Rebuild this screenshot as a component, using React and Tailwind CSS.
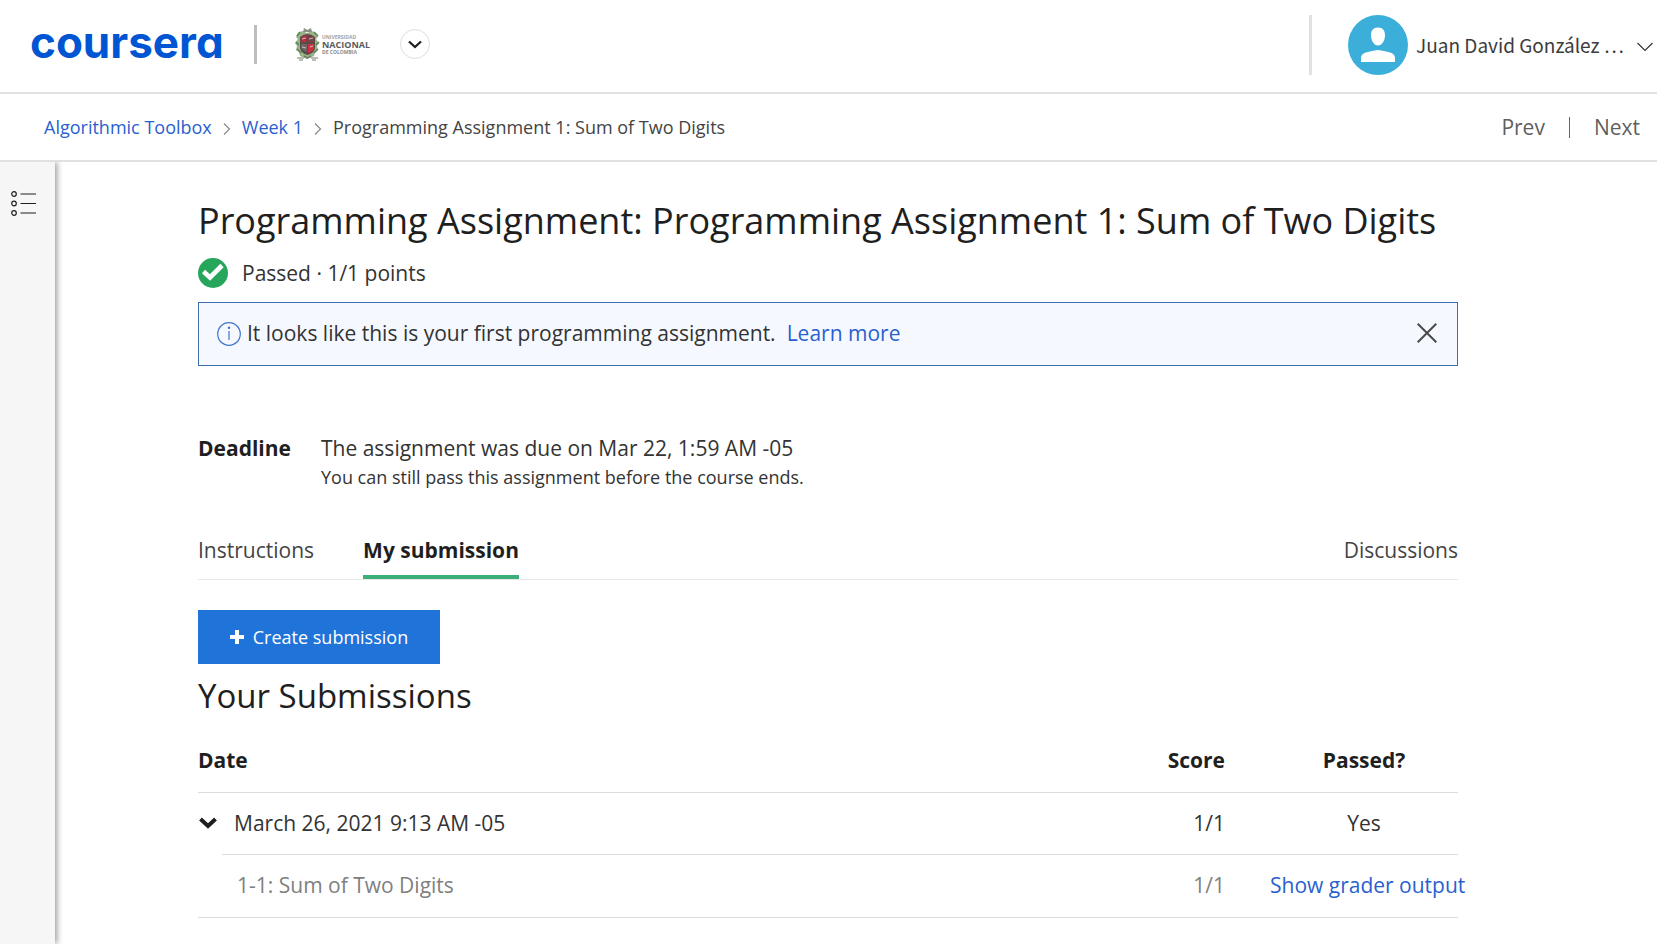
const crumbs = [
  { label: 'Algorithmic Toolbox', href: '#toolbox' },
  { label: 'Week 1', href: '#week-1' },
];

function UniversityLogo() {
  return (
    <svg viewBox="0 0 76 34" className="h-[34px] w-[76px]" role="img" aria-label="Universidad Nacional de Colombia">
      <path d="M8 4 4 6 2 10l2 2-3 4 2 3-1 4 3 2 1 4 7 3 7-3 1-4 3-2-1-4 2-3-3-4 2-2-2-4-4-2-5 2Z" fill="#9bb38a" />
      <path d="M6 5 3 9M20 5l4 4M2 15l3 3M25 15l-3 3M3 22l4 4M24 22l-4 4" stroke="#5f8555" strokeWidth="1.6" />
      <path d="M10 1l3.500 2L17 1l1 4h-9Z" fill="#8b9184" />
      <path d="M6 10q7.500-6 15 0v10c0 5-4 7-7.500 8C10 27 6 25 6 20Z" fill="#5a4a4a" />
      <path d="M7.500 10 12.500 8v7h-5Z" fill="#b8303a" />
      <path d="M14 17h6v3c0 3-2 5-6 6Z" fill="#d0313d" />
      <path d="M7 17h6v8c-4-1-6-3-6-6Z" fill="#6c6466" />
      <path d="M14 8l6 2v5h-6Z" fill="#7b4044" />
      <path d="M8 12l4-1M15 12l4-1M8 20l4 1M16 20l3-1" stroke="#c9b9b4" strokeWidth="1.200" />
      <path d="M3 31h7M17 31h7M5 33h4M18 33h4" stroke="#a3a99e" strokeWidth="1.500" />
      <path d="M10 29l3.500 2 3.500-2" stroke="#6e8263" strokeWidth="1.500" fill="none" />
      <g fontFamily="'Open Sans', sans-serif" fontWeight="700">
        <text x="28" y="12" fontSize="5" fill="#a3a3a3">UNIVERSIDAD</text>
        <text x="28" y="21" fontSize="9" fill="#5b5b5b">NACIONAL</text>
        <text x="28" y="27" fontSize="5" fill="#8a8a8a">DE COLOMBIA</text>
      </g>
    </svg>
  );
}

function Header() {
  return (
    <header className="flex h-[94px] items-start justify-between border-b-2 border-[#e1e1e1] pl-[30px] pr-1">
      <div className="flex h-[88px] items-center">
        <a href="#home" className="w-[193px] pb-1 font-['Inter',sans-serif] text-[44px] leading-[60px] font-bold text-[#0056d2] [font-feature-settings:'cv11']">
          coursera
        </a>
        <span className="ml-[31px] h-[39px] w-[3px] bg-[#bdbdbd]" />
        <a href="#university" className="ml-[37px]">
          <UniversityLogo />
        </a>
        <button type="button" aria-label="Choose program" className="ml-[30px] flex size-[30px] items-center justify-center rounded-full border border-[#dedede]">
          <svg viewBox="0 0 14 10" className="mt-[2px] h-[10px] w-[14px]" fill="none" stroke="#1f1f1f" strokeWidth="2.300">
            <path d="M1 1.500 7 7l6-5.500" />
          </svg>
        </button>
      </div>
      <div className="flex h-[90px] items-center">
        <span className="h-[60px] w-[3px] bg-[#e1e1e1]" />
        <button type="button" className="ml-9 flex items-center">
          <svg viewBox="0 0 60 60" className="size-[60px]">
            <circle cx="30" cy="30" r="30" fill="#3bafda" />
            <path d="M30 12.500c4.800 0 7.200 3 7 8-.2 5.500-3 10-7 10s-6.800-4.500-7-10c-.2-5 2.200-8 7-8Z" fill="#fff" />
            <path d="M13 47v-4c0-3 2-4.500 5-5.500 4-1.300 8-1.900 12-2.500 4 .6 8 1.200 12 2.500 3 1 5 2.500 5 5.500v4Z" fill="#fff" />
          </svg>
          <span className="ml-2 font-['Noto_Sans_CJK_SC',sans-serif] text-[19px] leading-[30px] text-[#3c3c3c]">Juan David González …</span>
          <svg viewBox="0 0 16 10" className="ml-[13px] mt-1 h-[10px] w-[16px]" fill="none" stroke="#333" strokeWidth="1.200">
            <path d="M.5 1 8 8.500 15.500 1" />
          </svg>
        </button>
      </div>
    </header>
  );
}

function Breadcrumbs() {
  return (
    <div className="flex h-[68px] items-center justify-between border-b-2 border-[#e1e1e1] pl-11 pr-[17px]">
      <nav aria-label="Breadcrumb" className="flex items-center text-[18px] leading-[26px]">
        {crumbs.map((c) => (
          <span key={c.label} className="flex items-center">
            <a href={c.href} className="text-[#2a5fcf]">{c.label}</a>
            <svg viewBox="0 0 8 12" className="mx-[11px] mt-1 h-[12px] w-[8px]" fill="none" stroke="#888" strokeWidth="1.200">
              <path d="m1 .5 5.500 5.500L1 11.500" />
            </svg>
          </span>
        ))}
        <span className="text-[#444]">Programming Assignment 1: Sum of Two Digits</span>
      </nav>
      <nav aria-label="Lesson" className="flex items-center text-[21px] leading-[30px] text-[#5f5f5f]">
        <a href="#prev">Prev</a>
        <span className="mx-6 h-[21px] w-px bg-[#666]" />
        <a href="#next">Next</a>
      </nav>
    </div>
  );
}

function Submissions() {
  return (
    <table className="mt-2 w-full table-fixed border-separate border-spacing-0 text-[21px] leading-[30px]">
      <colgroup>
        <col className="w-[24px]" />
        <col />
        <col className="w-[150px]" />
        <col className="w-[188px]" />
      </colgroup>
      <thead>
        <tr className="h-[65px] font-bold">
          <th colSpan={2} className="border-b border-[#dcdcdc] text-left">Date</th>
          <th className="border-b border-[#dcdcdc] pr-[45px] text-right">Score</th>
          <th className="border-b border-[#dcdcdc] text-center">Passed?</th>
        </tr>
      </thead>
      <tbody className="text-[#333]">
        <tr className="h-[62px]">
          <td className="pb-[2px]">
            <button type="button" aria-label="Collapse submission" className="block">
              <svg viewBox="0 0 20 14" className="h-[14px] w-[20px]" fill="none" stroke="#1f1f1f" strokeWidth="4">
                <path d="m2.500 3 7.500 7 7.500-7" />
              </svg>
            </button>
          </td>
          <td className="border-b border-[#dcdcdc] pb-[2px] pl-3">March 26, 2021 9:13 AM -05</td>
          <td className="border-b border-[#dcdcdc] pr-[45px] pb-[2px] text-right">1/1</td>
          <td className="border-b border-[#dcdcdc] pb-[2px] text-center">Yes</td>
        </tr>
        <tr className="h-[63px] text-[#808080]">
          <td className="border-b border-[#dcdcdc]" />
          <td className="border-b border-[#dcdcdc] pb-[2px] pl-[15px]">1-1: Sum of Two Digits</td>
          <td className="border-b border-[#dcdcdc] pr-[45px] pb-[2px] text-right">1/1</td>
          <td className="border-b border-[#dcdcdc] pb-[2px] whitespace-nowrap">
            <a href="#grader" className="text-[#2a5fcf]">Show grader output</a>
          </td>
        </tr>
      </tbody>
    </table>
  );
}

export default function App() {
  return (
    <div className="flex min-h-screen flex-col bg-white font-['Open_Sans',sans-serif] text-[#1f1f1f]">
      <Header />
      <Breadcrumbs />
      <div className="flex grow">
        <aside className="w-[55px] shrink-0 bg-[#f6f6f6] pl-[11px] pt-[29px] shadow-[2px_0_6px_rgba(0,0,0,0.4)] [clip-path:inset(0_-12px_0_0)]">
          <button type="button" aria-label="Course outline" className="block">
            <svg viewBox="0 0 26 26" className="size-[26px]" fill="none" stroke="#1f1f1f" strokeWidth="1.200">
              <circle cx="3" cy="3" r="2.300" />
              <circle cx="3" cy="12.500" r="2.300" />
              <circle cx="3" cy="22" r="2.300" />
              <path d="M9.500 3H25M9.500 12.500H25M9.500 22H25" />
            </svg>
          </button>
        </aside>
        <main className="grow pl-[143px] pr-[199px] pt-[35px]">
          <h1 className="text-[36px] leading-[48px]">Programming Assignment: Programming Assignment 1: Sum of Two Digits</h1>
          <div className="mt-[13px] flex items-center">
            <svg viewBox="0 0 30 30" className="size-[30px]">
              <circle cx="15" cy="15" r="15" fill="#26a65b" />
              <path d="m5.500 13.500 6.500 6L24 7.500" fill="none" stroke="#fff" strokeWidth="4.600" />
            </svg>
            <p className="ml-[14px] text-[21px] leading-[30px] text-[#333]">Passed · 1/1 points</p>
          </div>
          <section className="mt-[14px] flex h-[64px] items-center border border-[#3c6fb0] bg-[#f5f9ff] pl-[18px] pr-5 text-[21px] leading-[30px]">
            <svg viewBox="0 0 24 24" className="size-[24px]" fill="none" stroke="#3f74cf" strokeWidth="1.200">
              <circle cx="12" cy="12" r="11.300" />
              <path d="M12 9v9" />
              <circle cx="12" cy="5.800" r=".6" fill="#3f74cf" />
            </svg>
            <p className="ml-[6px] pb-[2px] text-[#333]">It looks like this is your first programming assignment.</p>
            <a href="#learn-more" className="ml-[11px] pb-[2px] text-[#2a5fcf]">Learn more</a>
            <button type="button" aria-label="Dismiss" className="ml-auto pb-[2px]">
              <svg viewBox="0 0 20 20" className="size-[20px]" fill="none" stroke="#4a4a4a" strokeWidth="2">
                <path d="m.7.7 18.600 18.600M19.300.7.7 19.300" />
              </svg>
            </button>
          </section>
          <dl className="mt-[67px] flex">
            <dt className="w-[123px] text-[21px] leading-[30px] font-bold">Deadline</dt>
            <dd className="text-[#333]">
              <p className="text-[21px] leading-[30px]">The assignment was due on Mar 22, 1:59 AM -05</p>
              <p className="text-[18px] leading-[28px]">You can still pass this assignment before the course ends.</p>
            </dd>
          </dl>
          <nav aria-label="Assignment" className="mt-11 flex border-b border-[#e8e8e8] text-[21px] leading-[30px] text-[#444]">
            <a href="#instructions" className="h-[44px]">Instructions</a>
            <a href="#my-submission" aria-current="page" className="ml-[49px] h-[44px] border-b-4 border-[#3aaf78] font-bold text-[#1f1f1f]">My submission</a>
            <a href="#discussions" className="ml-auto h-[44px]">Discussions</a>
          </nav>
          <button type="button" className="mt-[30px] flex h-[54px] w-[242px] items-center justify-center bg-[#2073d8] text-[18px] leading-[26px] text-white">
            <svg viewBox="0 0 14 14" className="mr-[9px] size-[14px]" fill="none" stroke="#fff" strokeWidth="4">
              <path d="M7 0v14M0 7h14" />
            </svg>
            Create submission
          </button>
          <h2 className="mt-2 text-[33px] leading-[48px]">Your Submissions</h2>
          <Submissions />
        </main>
      </div>
    </div>
  );
}
